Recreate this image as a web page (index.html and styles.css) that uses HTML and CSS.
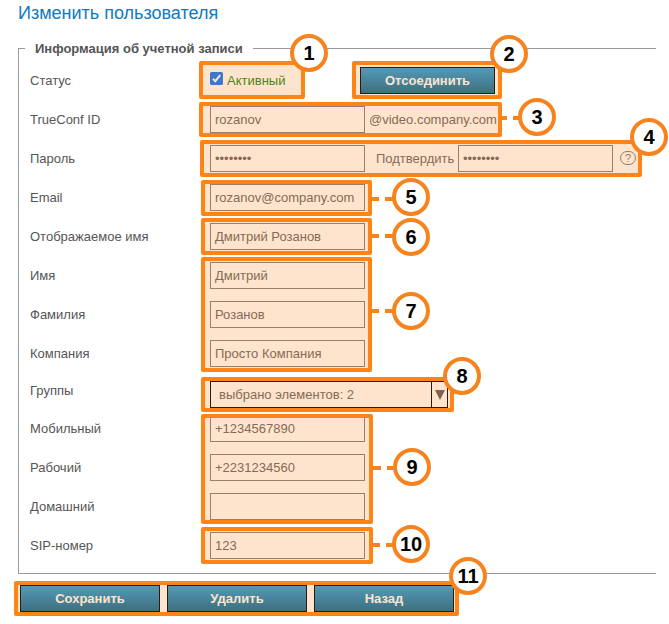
FILE: index.html
```html
<!DOCTYPE html>
<html lang="ru">
<head>
<meta charset="utf-8">
<title>Изменить пользователя</title>
<link rel="stylesheet" href="styles.css">
</head>
<body>
<h1>Изменить пользователя</h1>
<form>
<fieldset>
<legend>Информация об учетной записи</legend>
<div class="row"><span class="label">Статус</span><label class="active"><svg class="check" viewBox="0 0 13 13"><rect width="13" height="13" rx="1.5"/><path d="M3 6.8 5.3 9.2 10.2 3.2"/></svg>Активный</label><button class="btn detach" type="button">Отсоединить</button></div>
<div class="row"><span class="label">TrueConf ID</span><span class="field">rozanov</span><span class="domain">@video.company.com</span></div>
<div class="row"><span class="label">Пароль</span><span class="field">••••••••</span><span class="confirm">Подтвердить</span><span class="field">••••••••</span><svg class="help" viewBox="0 0 16 14"><rect x=".5" y=".5" width="15" height="13" rx="6.5"/><text x="8" y="11" text-anchor="middle">?</text></svg></div>
<div class="row"><span class="label">Email</span><span class="field">rozanov@company.com</span></div>
<div class="row"><span class="label">Отображаемое имя</span><span class="field">Дмитрий Розанов</span></div>
<div class="row"><span class="label">Имя</span><span class="field">Дмитрий</span></div>
<div class="row"><span class="label">Фамилия</span><span class="field">Розанов</span></div>
<div class="row"><span class="label">Компания</span><span class="field">Просто Компания</span></div>
<div class="row groups"><span class="label">Группы</span><div class="select"><span class="value">выбрано элементов: 2</span><span class="arrow"><svg viewBox="0 0 10 10"><path d="M0 0H10L5 10Z"/></svg></span></div></div>
<div class="row"><span class="label">Мобильный</span><span class="field">+1234567890</span></div>
<div class="row"><span class="label">Рабочий</span><span class="field">+2231234560</span></div>
<div class="row"><span class="label">Домашний</span><span class="field"></span></div>
<div class="row"><span class="label">SIP-номер</span><span class="field">123</span></div>
</fieldset>
<div class="actions"><button class="btn" type="button">Сохранить</button><button class="btn" type="button">Удалить</button><button class="btn" type="button">Назад</button></div>
</form>

<div class="frame f1"></div><div class="frame f2"></div><div class="frame f3"></div><div class="frame f4"></div>
<div class="frame f5"></div><div class="frame f6"></div><div class="frame f7"></div><div class="frame f8"></div>
<div class="frame f9"></div><div class="frame f10"></div><div class="frame f11"></div>
<i class="dash d3"></i><i class="dash d5"></i><i class="dash d6"></i><i class="dash d7"></i><i class="dash d9"></i><i class="dash d10"></i>
<b class="num n1">1</b><b class="num n2">2</b><b class="num n3">3</b><b class="num n4">4</b><b class="num n5">5</b><b class="num n6">6</b><b class="num n7">7</b><b class="num n8">8</b><b class="num n9">9</b><b class="num n10">10</b><b class="num n11">11</b>
</body>
</html>
```
FILE: styles.css
```css
* { box-sizing: border-box; }
html { background: #fff; }
body {
  margin: 0;
  height: 624px;
  overflow: hidden;
  font: 13px/16px "Liberation Sans", Arial, sans-serif;
  color: #555;
}
h1 {
  margin: 0;
  padding: 2px 0 0 18px;
  height: 41px;
  font-size: 18px;
  line-height: 22px;
  font-weight: normal;
  color: #0f7abd;
}
fieldset {
  margin: 0 13px 0 18px;
  padding: 5px 0 8px 11px;
  min-width: 0;
  height: 533px;
  border: 1px solid #999;
  border-right: 0;
}
legend {
  margin-left: -5px;
  padding: 0 10px;
  height: 15px;
  font-weight: bold;
  white-space: nowrap;
}
.row { display: flex; align-items: center; height: 39px; }
.groups { height: 36px; }
.label { width: 180px; flex: none; }
.field {
  width: 155px;
  height: 27px;
  flex: none;
  padding: 0 4px;
  border: 1px solid #9a7e69;
  line-height: 25px;
  color: #866a55;
  white-space: nowrap;
}
.domain { margin-left: 4px; color: #866a55; }
.confirm { width: 93px; padding-left: 11px; color: #866a55; flex: none; }
.active { display: flex; width: 150px; color: #4c8415; }
.check { width: 13px; height: 13px; margin: -1px 4px 0 0; fill: #3b78c9; }
.check path { fill: none; stroke: #fee4cd; stroke-width: 2; }
.help { width: 16px; height: 14px; margin: -2px 0 0 7px; fill: none; stroke: #9a7a62; }
.help text { font-size: 11px; fill: #9a7a62; stroke: none; }
.select {
  display: flex;
  width: 238px;
  height: 27px;
  margin-top: 7px;
  border: 1px solid #2b1b10;
  line-height: 26px;
  color: #866a55;
}
.value { flex: 1; padding-left: 8px; }
.arrow { display: flex; width: 16px; align-items: center; justify-content: center; border-left: 1px solid #2b1b10; }
.arrow svg { width: 10px; height: 10px; fill: #7d6350; }
.btn {
  width: 140px;
  height: 27px;
  padding: 0;
  border: 1px solid #291b12;
  background: linear-gradient(#539ab6, #3e6f80);
  color: #fee4cd;
  font: bold 13px/25px "Liberation Sans", Arial, sans-serif;
}
.detach { width: 135px; }
.actions { display: flex; gap: 7px; padding: 11px 0 0 20px; }

/* Callout overlay: the tint sits beneath the form, the outline above it. */
.frame { position: absolute; border: 4px solid #ff8415; border-radius: 2px; }
.frame::before { content: ""; position: absolute; inset: 0; z-index: -1; background: #fee4cd; }
.f1 { left: 199px; top: 61px; width: 106px; height: 38px; }
.f2 { left: 352px; top: 61px; width: 150px; height: 38px; }
.f3 { left: 199px; top: 102px; width: 303px; height: 35px; }
.f4 { left: 200px; top: 140px; width: 442px; height: 37px; }
.f5 { left: 201px; top: 180px; width: 171px; height: 36px; }
.f6 { left: 201px; top: 218px; width: 171px; height: 37px; }
.f7 { left: 201px; top: 257px; width: 171px; height: 115px; }
.f8 { left: 201px; top: 377px; width: 253px; height: 35px; }
.f9 { left: 201px; top: 414px; width: 172px; height: 110px; }
.f10 { left: 201px; top: 527px; width: 172px; height: 37px; }
.f11 { left: 14px; top: 581px; width: 445px; height: 35px; }
.dash { position: absolute; left: 371px; width: 22px; height: 4px; background: linear-gradient(90deg, #f6831d 8px, transparent 8px 14px, #f6831d 14px); }
.d3 { left: 499px; top: 116px; }
.d5 { top: 197px; }
.d6 { top: 234px; }
.d7 { top: 309px; }
.d9 { left: 373px; top: 466px; }
.d10 { left: 372px; top: 543px; }
.num {
  position: absolute;
  width: 38px;
  height: 38px;
  border: 4px solid #f6831d;
  border-radius: 50%;
  background: #fff;
  color: #000;
  font-size: 20px;
  line-height: 31px;
  text-align: center;
}
.n1 { left: 290px; top: 34px; }
.n2 { left: 490px; top: 35px; }
.n3 { left: 518px; top: 98px; }
.n4 { left: 630px; top: 118px; }
.n5 { left: 392px; top: 178px; }
.n6 { left: 392px; top: 218px; }
.n7 { left: 392px; top: 292px; }
.n8 { left: 443px; top: 357px; }
.n9 { left: 393px; top: 448px; }
.n10 { left: 392px; top: 525px; }
.n11 { left: 449px; top: 557px; }
```
